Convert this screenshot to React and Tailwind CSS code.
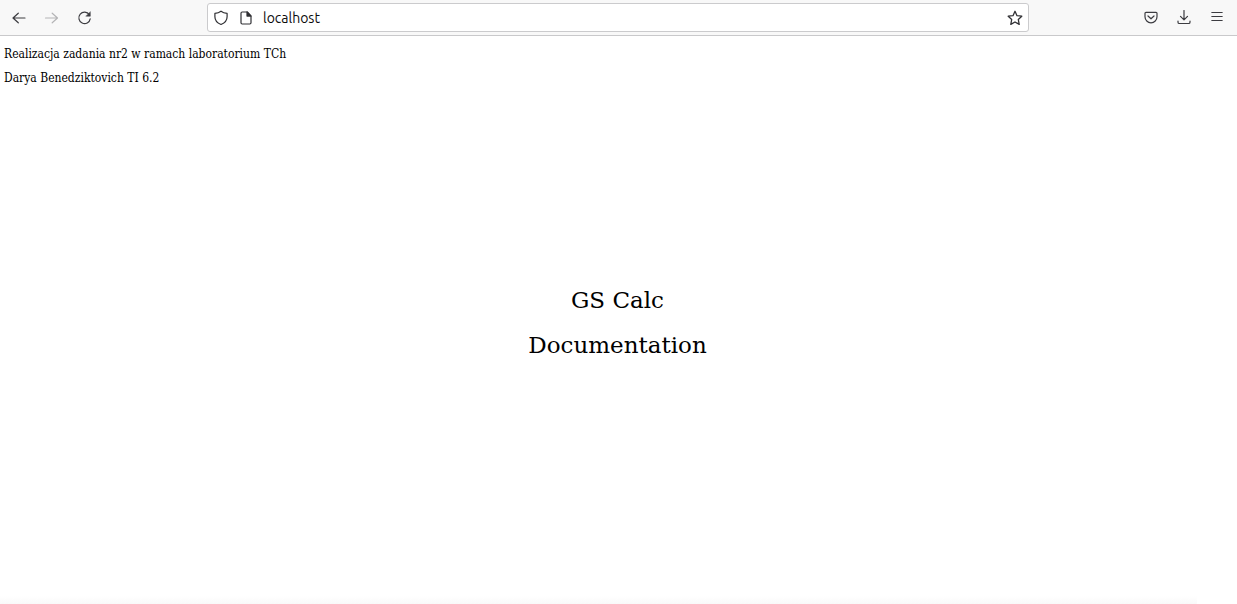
import React from "react";

function ToolButton({ label, children, disabled }) {
  return (
    <button
      type="button"
      aria-label={label}
      disabled={disabled}
      className="flex h-8 w-8 shrink-0 items-center justify-center text-[#3c3c41] disabled:text-[#b4b4b6]"
    >
      <svg
        viewBox="0 0 16 16"
        className="h-4 w-4"
        fill="none"
        stroke="currentColor"
        strokeWidth="1.2"
        strokeLinecap="round"
        strokeLinejoin="round"
        aria-hidden="true"
      >
        {children}
      </svg>
    </button>
  );
}

function Toolbar() {
  return (
    <header className="flex h-9 items-center border-b border-[#c9c9cb] bg-[#f8f8f8] pr-1 pl-[3px]">
      <nav aria-label="History" className="flex gap-px">
        <ToolButton label="Back">
          <path d="M14 8H2M7.300 3.200 2 8l5.300 4.800" />
        </ToolButton>
        <ToolButton label="Forward" disabled>
          <path d="M1.500 8h12M8.200 3.200 13.500 8l-5.300 4.800" />
        </ToolButton>
        <ToolButton label="Reload">
          <path d="M12.300 4.700A5.700 5.700 0 1 0 13.200 8.800" />
          <path d="M13.300 2v4.200H9.100z" fill="currentColor" strokeWidth="0.500" />
        </ToolButton>
      </nav>

      <div className="mx-[106px] flex h-[29px] min-w-0 flex-1 items-center rounded-[3px] border border-[#cbcbcd] bg-white px-[5px] text-[#303034]">
        <svg viewBox="0 0 16 16" className="h-4 w-4 shrink-0" fill="none" stroke="currentColor" strokeWidth="1.2" strokeLinejoin="round" aria-hidden="true">
          <path d="M8 1.200c1.700 1.300 3.800 2 6.100 2.200v3.300c0 3.600-2.200 6.200-6.100 7.800-3.900-1.600-6.100-4.200-6.100-7.800V3.400C4.200 3.200 6.300 2.500 8 1.200z" />
        </svg>
        <svg viewBox="0 0 16 16" className="ml-[9px] h-4 w-4 shrink-0" fill="none" stroke="currentColor" strokeWidth="1.2" strokeLinejoin="round" aria-hidden="true">
          <path d="M9.300 2H4.200a1.200 1.200 0 0 0-1.200 1.200v9.600A1.200 1.200 0 0 0 4.200 14h7.600a1.200 1.200 0 0 0 1.200-1.200V5.900z" />
          <path d="M9 2v4.100h4z" fill="currentColor" />
        </svg>
        <input
          type="text"
          aria-label="Address"
          defaultValue="localhost"
          className="ml-[9px] min-w-0 flex-1 bg-transparent font-['Ubuntu','Noto_Sans',sans-serif] text-sm text-[#0c0c0d] outline-none"
        />
        <button type="button" aria-label="Bookmark this page" className="flex h-4 w-4 shrink-0 items-center justify-center">
          <svg viewBox="0 0 16 16" className="h-4 w-4" fill="none" stroke="currentColor" strokeWidth="1.3" strokeLinejoin="round" aria-hidden="true">
            <path d="M8 1.300 10 5.700l4.800.5-3.500 3.300.9 4.900L8 12l-4.200 2.400.9-4.900L1.200 6.200 6 5.700z" />
          </svg>
        </button>
      </div>

      <div className="flex gap-px">
        <ToolButton label="Save to Pocket">
          <path d="M3 2.300h10a1 1 0 0 1 1 1v3.500a6 6 0 0 1-12 0V3.300a1 1 0 0 1 1-1z" />
          <path d="M5 6 8 8.800l3-2.800" />
        </ToolButton>
        <ToolButton label="Downloads">
          <path d="M8 .5v9M4.500 6.300 8 9.800l3.500-3.500M2 11v1.200a1.300 1.300 0 0 0 1.300 1.300h9.400a1.300 1.300 0 0 0 1.300-1.300V11" />
        </ToolButton>
        <ToolButton label="Open menu">
          <path d="M2.800 2.500h10.400M2.800 6.500h10.400M2.800 10.500h10.400" strokeWidth="1.100" />
        </ToolButton>
      </div>
    </header>
  );
}

export default function App() {
  return (
    <div className="flex min-h-screen flex-col bg-white font-['DejaVu_Serif',serif] text-black">
      <Toolbar />
      <main className="flex flex-1 flex-col">
        <div className="flex flex-col gap-2 px-1 pt-[10px] font-['DejaVu_Serif_Condensed','DejaVu_Serif',serif] text-xs">
          <p>Realizacja zadania nr2 w ramach laboratorium TCh</p>
          <p>Darya Benedziktovich TI 6.2</p>
        </div>
        <div className="mt-[198px] flex flex-col items-center gap-[13px] pr-[2px] text-[23px] leading-8">
          <p>GS Calc</p>
          <p>Documentation</p>
        </div>
      </main>
      <div className="mr-10 h-2 bg-linear-to-b from-white to-[#f9f9f9]" />
    </div>
  );
}
